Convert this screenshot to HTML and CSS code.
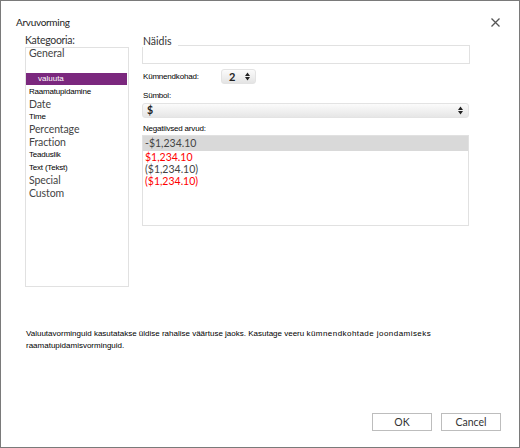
FILE: index.html
```
<!DOCTYPE html>
<html lang="et">
<head>
<meta charset="utf-8">
<title>Arvuvorming</title>
<link rel="stylesheet" href="styles.css">
</head>
<body>
<div class="dialog">
  <div class="titlebar">
    <span class="title">Arvuvorming</span>
    <span class="close" aria-label="Sulge">
      <svg width="9" height="9" viewBox="0 0 9 9"><path d="M0.5 0.5 L8.5 8.5 M8.5 0.5 L0.5 8.5" stroke="#555" stroke-width="1.3" fill="none"/></svg>
    </span>
  </div>
  <div class="main">
    <div class="left">
      <div class="big-lbl cat-lbl">Kategooria:</div>
      <div class="catlist">
        <div class="cat big first">General</div>
        <div class="cat spacer"></div>
        <div class="cat selected">valuuta</div>
        <div class="cat small">Raamatupidamine</div>
        <div class="cat big">Date</div>
        <div class="cat small">Time</div>
        <div class="cat big">Percentage</div>
        <div class="cat big">Fraction</div>
        <div class="cat small">Teaduslik</div>
        <div class="cat small">Text (Tekst)</div>
        <div class="cat big">Special</div>
        <div class="cat big">Custom</div>
      </div>
    </div>
    <div class="right">
      <div class="big-lbl sample-lbl">Näidis</div>
      <div class="sample-box"></div>
      <div class="dec-row">
        <span class="small-lbl">Kümnendkohad:</span>
        <div class="spinner">
          <span class="spin-val">2</span>
          <svg class="arrows" width="5" height="9" viewBox="0 0 5 9"><path d="M0 4 L2.5 0.5 L5 4 Z M0 5 L2.5 8.5 L5 5 Z" fill="#222"/></svg>
        </div>
      </div>
      <div class="small-lbl sym-lbl">Sümbol:</div>
      <div class="select">
        <span class="sel-val">$</span>
        <svg class="arrows" width="5" height="9" viewBox="0 0 5 9"><path d="M0 4 L2.5 0.5 L5 4 Z M0 5 L2.5 8.5 L5 5 Z" fill="#222"/></svg>
      </div>
      <div class="small-lbl neg-lbl">Negatiivsed arvud:</div>
      <div class="neglist">
        <div class="neg sel">-$1,234.10</div>
        <div class="neg red">$1,234.10</div>
        <div class="neg">($1,234.10)</div>
        <div class="neg red">($1,234.10)</div>
      </div>
    </div>
  </div>
  <div class="desc">Valuutavorminguid kasutatakse üldise rahalise väärtuse jaoks. Kasutage veeru <span class="spaced">kümnendkohtade joondamiseks</span><br>raamatupidamisvorminguid.</div>
  <div class="footer">
    <button class="btn">OK</button>
    <button class="btn">Cancel</button>
  </div>
</div>
</body>
</html>
```
FILE: styles.css
```
* { box-sizing: border-box; }
html, body { margin: 0; padding: 0; background: #fff; }
body { font-family: Lato, "Noto Sans", "Liberation Sans", sans-serif; }

.dialog {
  width: 520px;
  height: 448px;
  border: 1px solid #7a7a7a;
  display: flex;
  flex-direction: column;
  background: #fff;
}

.titlebar {
  height: 35px;
  display: flex;
  justify-content: space-between;
  align-items: flex-start;
  padding: 14px 19px 0 15px;
}
.title {
  font-size: 10px;
  line-height: 14px;
  letter-spacing: -0.3px;
  color: #222;
}
.close {
  display: block;
  width: 9px;
  height: 9px;
  margin-top: 3px;
}
.close svg { display: block; }

.main {
  display: flex;
  padding-left: 24px;
  gap: 13px;
}

.big-lbl {
  font-size: 10.5px;
  line-height: 11px;
  height: 11px;
  color: #333;
}
.cat-lbl {
  line-height: 9px;
  letter-spacing: -0.3px;
}

.left { width: 104px; }
.catlist {
  height: 240px;
  border: 1px solid #e1e1e1;
}
.cat {
  height: 12.7px;
  line-height: 12.7px;
  padding-left: 3px;
  white-space: nowrap;
}
.cat.big {
  font-size: 10.5px;
  color: #444;
  letter-spacing: -0.1px;
}
.cat.first { height: 11px; line-height: 11px; }
.cat.spacer { height: 14px; }
.cat.small {
  font-family: "Liberation Sans", sans-serif;
  font-size: 8px;
  letter-spacing: -0.2px;
  color: #000;
  padding-top: 1px;
  line-height: 11.7px;
}
.cat.selected {
  height: 12px;
  line-height: 12px;
  background: #7b287e;
  color: #fff;
  font-family: "Liberation Sans", sans-serif;
  font-size: 8px;
  padding-left: 12px;
  margin-right: 1px;
}

.right { width: 328px; }
.sample-lbl {
  position: relative;
  z-index: 1;
  background: #fff;
  width: 36px;
  padding-left: 1px;
  line-height: 10px;
}
.sample-box {
  margin-top: -2px;
  height: 19px;
  border: 1px solid #e1e1e1;
}

.small-lbl {
  font-family: "Liberation Sans", sans-serif;
  font-size: 8px;
  letter-spacing: -0.2px;
  color: #000;
  line-height: 11px;
  padding-left: 1px;
}

.dec-row {
  margin-top: 5px;
  display: flex;
  align-items: center;
  height: 15px;
}
.dec-row .small-lbl { width: 79px; }
.spinner {
  width: 35px;
  height: 15px;
  border-radius: 3px;
  border: 1px solid #e3e3e3;
  background: linear-gradient(#fbfbfb, #e4e4e4);
  display: flex;
  align-items: center;
  padding-left: 7px;
  padding-right: 5px;
  justify-content: space-between;
}
.spin-val {
  font-size: 11px;
  font-weight: 700;
  color: #222;
  line-height: 13px;
}
.arrows { display: block; }

.sym-lbl { margin-top: 6px; }
.select {
  margin-top: 2px;
  height: 15px;
  width: 327px;
  border-radius: 3px;
  border: 1px solid #e3e3e3;
  background: linear-gradient(#fbfbfb, #e6e6e6);
  display: flex;
  align-items: center;
  justify-content: space-between;
  padding-left: 4px;
  padding-right: 5px;
}
.sel-val {
  font-size: 10.5px;
  font-weight: 700;
  color: #222;
  line-height: 13px;
}

.neg-lbl { margin-top: 5px; }
.neglist {
  margin-top: 1px;
  height: 91px;
  width: 327px;
  border: 1px solid #e1e1e1;
}
.neg {
  font-size: 10.5px;
  color: #444;
  height: 12.4px;
  line-height: 12.4px;
  padding-left: 2px;
}
.neg.sel {
  background: #d9d9d9;
  height: 14.5px;
  line-height: 14px;
}
.neg.red { color: #ff0000; }

.desc {
  margin-top: 41px;
  padding-left: 25px;
  font-family: "Liberation Sans", sans-serif;
  font-size: 8px;
  line-height: 11.5px;
  letter-spacing: 0;
  color: #000;
}
.desc .spaced { letter-spacing: 0.45px; }

.footer {
  margin-top: auto;
  display: flex;
  justify-content: flex-end;
  gap: 9px;
  padding: 0 18px 16px 0;
}
.btn {
  width: 60px;
  height: 18px;
  border: 1px solid #bdbdbd;
  background: #fff;
  font-family: Lato, "Noto Sans", sans-serif;
  font-size: 10.5px;
  color: #333;
  padding: 0;
  line-height: 16px;
}
```
